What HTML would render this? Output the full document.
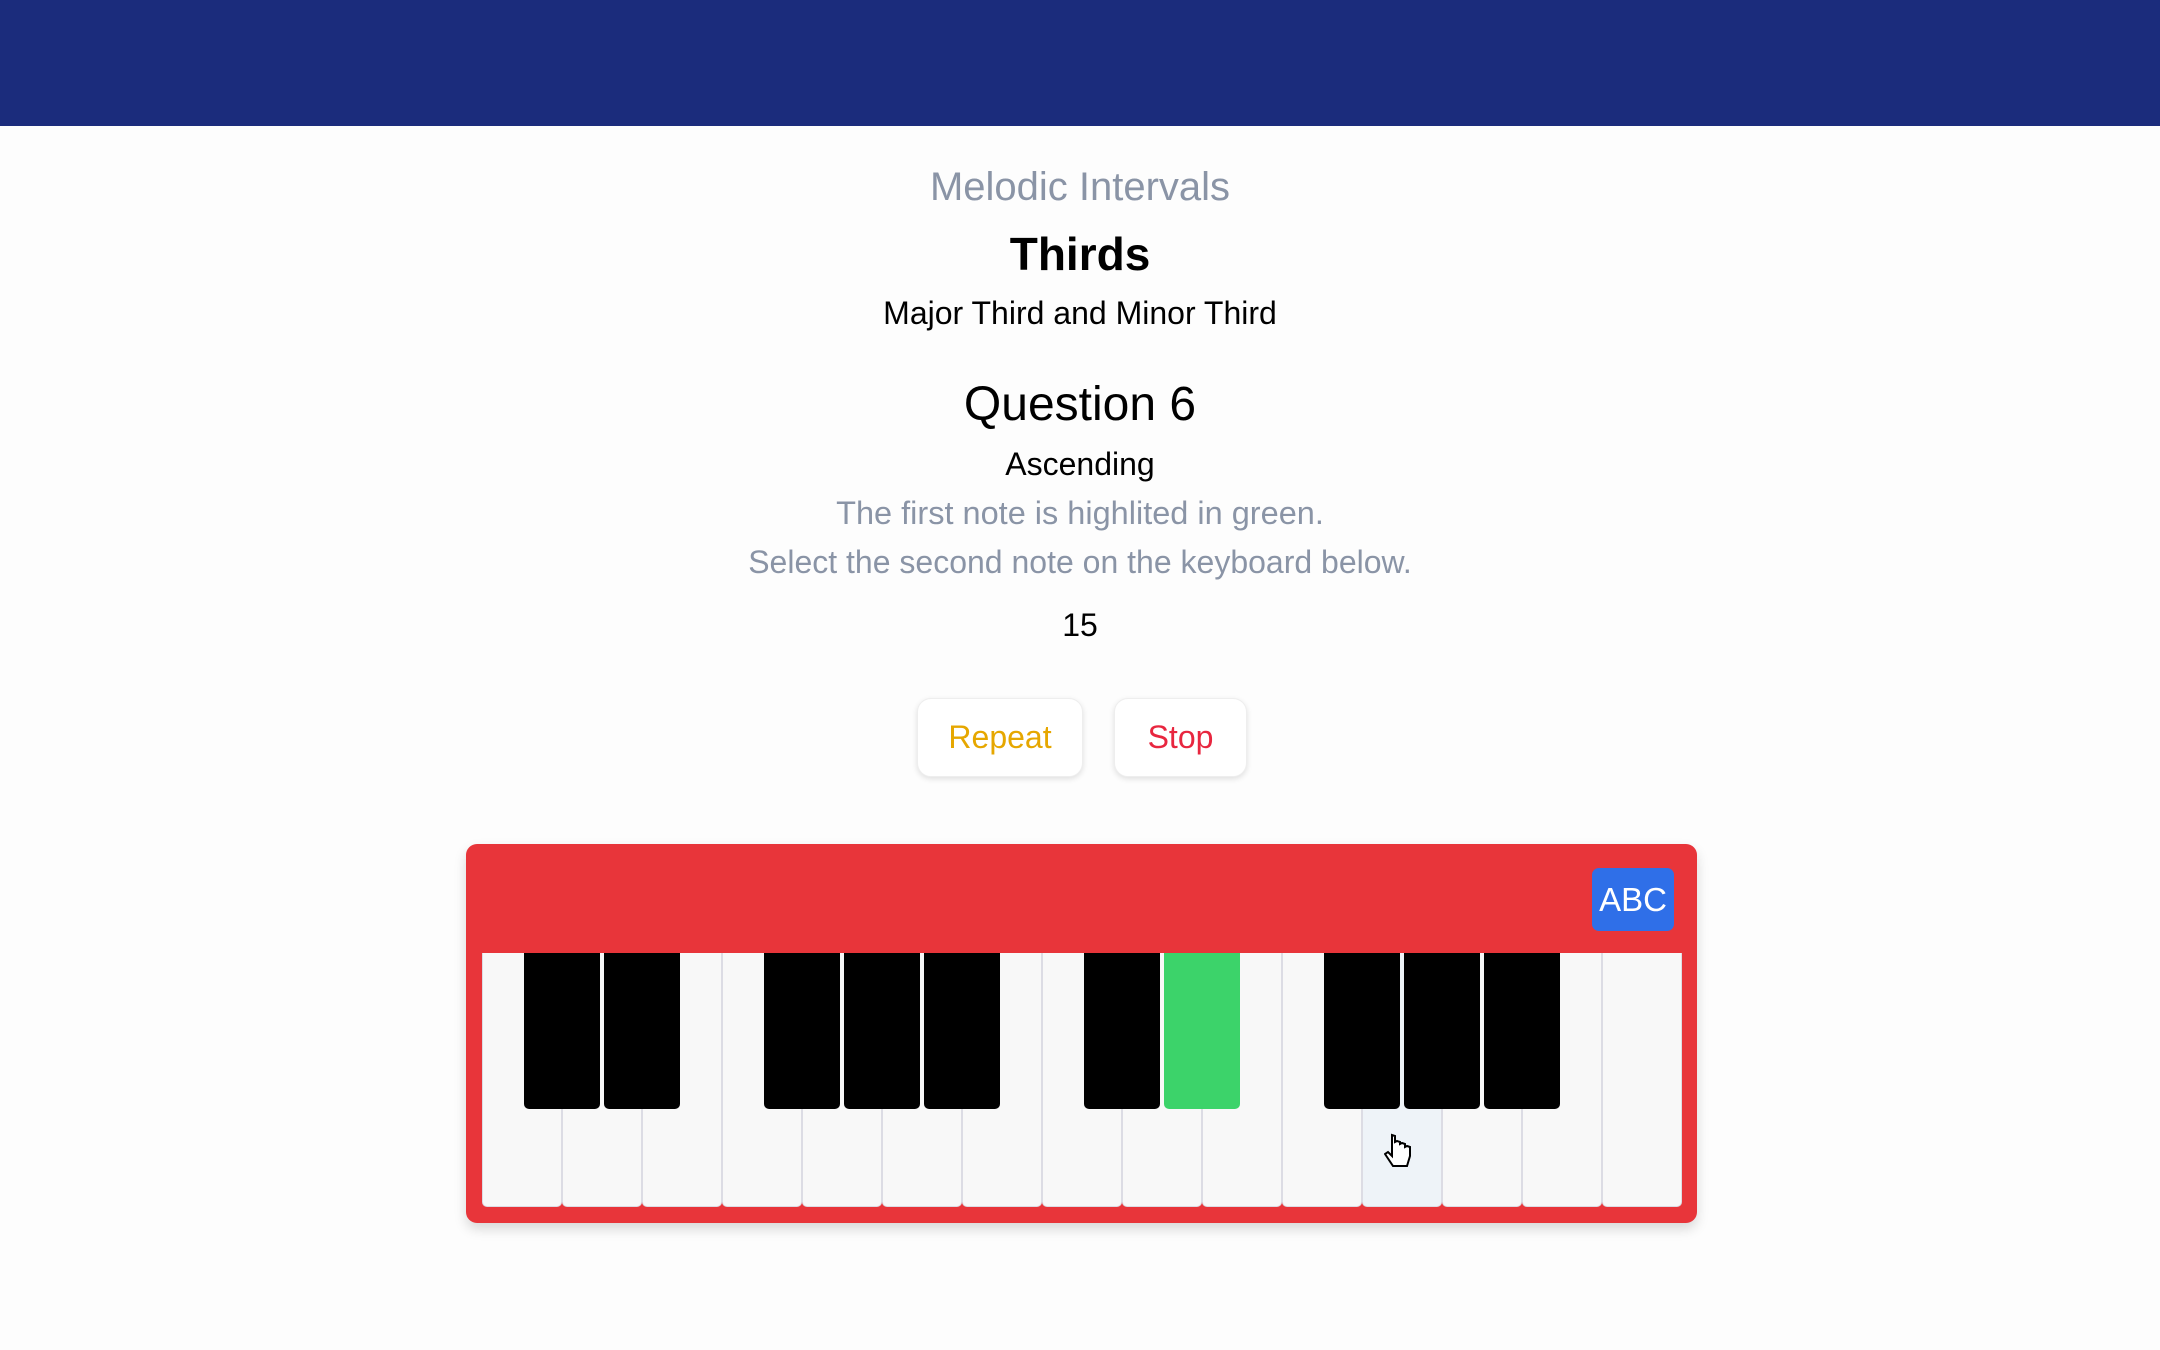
<!DOCTYPE html>
<html><head><meta charset="utf-8"><style>
*{margin:0;padding:0;box-sizing:border-box}
body{width:2160px;height:1350px;background:#fdfdfd;font-family:"Liberation Sans",sans-serif;position:relative;overflow:hidden}
.hdr{position:absolute;left:0;top:0;width:2160px;height:126px;background:#1b2c7c}
.t{position:absolute;left:0;width:2160px;text-align:center;line-height:1;transform:translateY(-50%)}
.btn{position:absolute;top:698px;height:79px;border-radius:14px;background:#fff;box-shadow:0 2px 6px rgba(0,0,0,.12);border:1px solid #eee;font-size:32px;line-height:77px;text-align:center}
.panel{position:absolute;left:466px;top:844px;width:1231px;height:379px;background:#e8353a;border-radius:11px;box-shadow:0 6px 12px rgba(0,0,0,.15)}
.w{position:absolute;top:953px;width:80px;height:254px;background:#f8f8f8;border-radius:0 0 5px 5px;border:1px solid #dcdce4;border-top:none}
.b{position:absolute;top:953px;width:76px;height:156px;background:#000;border-radius:0 0 5px 5px}
.abc{position:absolute;left:1592px;top:868px;width:82px;height:63px;background:#2f6fe8;border-radius:7px;color:#fff;font-size:33px;line-height:63px;text-align:center}
</style></head><body>
<div class="hdr"></div>
<div class="t" style="top:187px;font-size:40px;color:#8a94a6">Melodic Intervals</div>
<div class="t" style="top:254px;font-size:46px;font-weight:bold;color:#000">Thirds</div>
<div class="t" style="top:313px;font-size:32px;color:#000">Major Third and Minor Third</div>
<div class="t" style="top:405px;font-size:48px;color:#000">Question 6</div>
<div class="t" style="top:464px;font-size:32px;color:#000">Ascending</div>
<div class="t" style="top:513px;font-size:32.5px;color:#8a94a6">The first note is highlited in green.</div>
<div class="t" style="top:562px;font-size:32px;color:#8a94a6">Select the second note on the keyboard below.</div>
<div class="t" style="top:625px;font-size:32px;color:#000">15</div>
<div class="btn" style="left:917px;width:166px;color:#e6a700">Repeat</div>
<div class="btn" style="left:1114px;width:133px;color:#e8263f">Stop</div>
<div class="panel"></div>
<div class="abc">ABC</div>
<div class="w" style="left:482px"></div>
<div class="w" style="left:562px"></div>
<div class="w" style="left:642px"></div>
<div class="w" style="left:722px"></div>
<div class="w" style="left:802px"></div>
<div class="w" style="left:882px"></div>
<div class="w" style="left:962px"></div>
<div class="w" style="left:1042px"></div>
<div class="w" style="left:1122px"></div>
<div class="w" style="left:1202px"></div>
<div class="w" style="left:1282px"></div>
<div class="w" style="left:1362px;background:#eef3f8"></div>
<div class="w" style="left:1442px"></div>
<div class="w" style="left:1522px"></div>
<div class="w" style="left:1602px"></div>
<div class="b" style="left:524px"></div>
<div class="b" style="left:604px"></div>
<div class="b" style="left:764px"></div>
<div class="b" style="left:844px"></div>
<div class="b" style="left:924px"></div>
<div class="b" style="left:1084px"></div>
<div class="b" style="left:1164px;background:#3cd36a"></div>
<div class="b" style="left:1324px"></div>
<div class="b" style="left:1404px"></div>
<div class="b" style="left:1484px"></div>
<svg style="position:absolute;left:1384px;top:1133px" width="30" height="40" viewBox="0 0 30 40"><path d="M8 3v20l-4-4-3 2 8 12h14l3-10v-9l-3-1-2 1v-3l-3-1-2 1v-2l-3-1-2 1V3l-3-1z" fill="#fff" stroke="#000" stroke-width="2"/></svg>
</body></html>
